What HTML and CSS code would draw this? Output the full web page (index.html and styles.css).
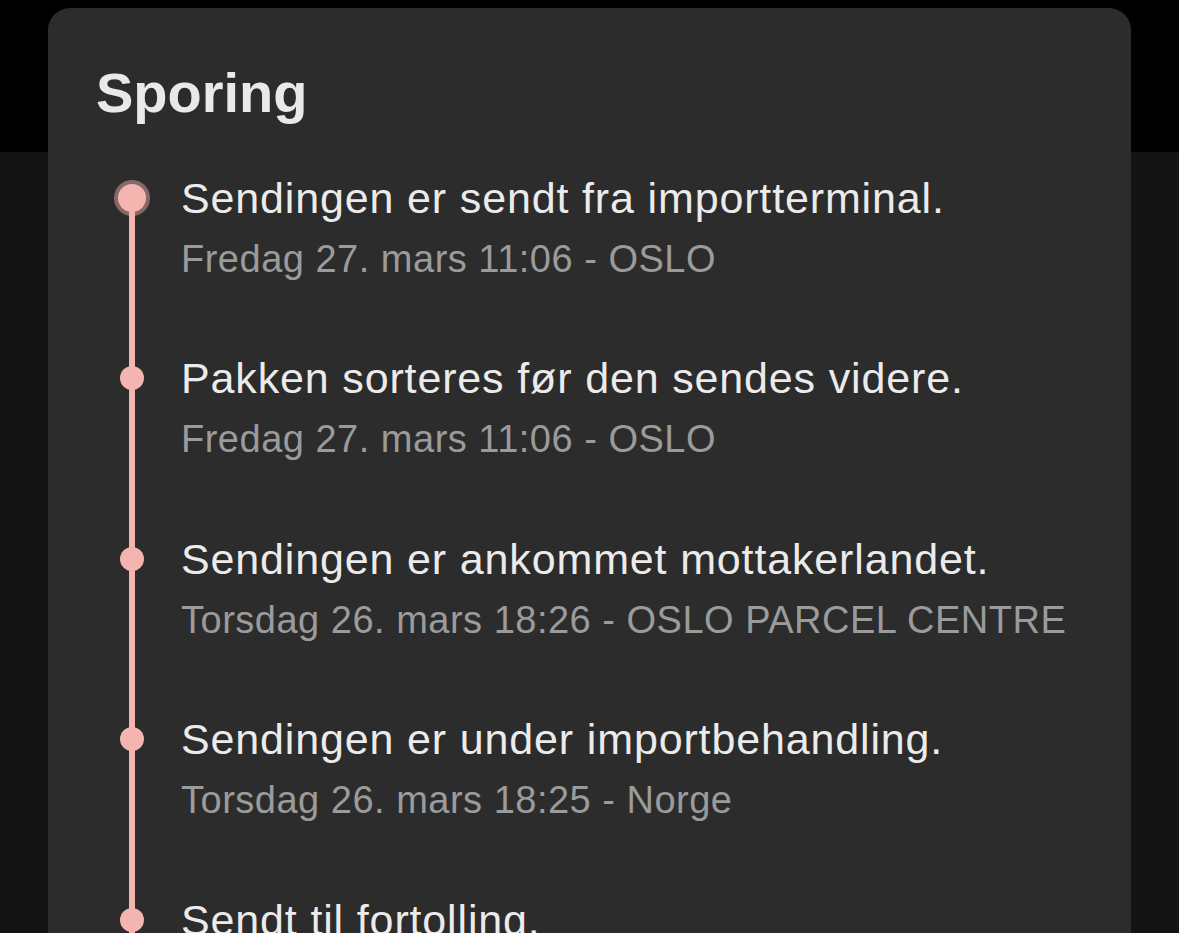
FILE: index.html
```html
<!DOCTYPE html>
<html lang="no">
<head>
<meta charset="utf-8">
<title>Sporing</title>
<link rel="stylesheet" href="styles.css">
</head>
<body>
<main class="page">
  <section class="card">
    <h1 class="title">Sporing</h1>
    <ol class="timeline">
      <li class="event event-current">
        <span class="marker"><span class="dot"></span></span>
        <div class="event-body">
          <p class="event-title">Sendingen er sendt fra importterminal.</p>
          <p class="event-meta">Fredag 27. mars 11:06 - OSLO</p>
        </div>
      </li>
      <li class="event">
        <span class="marker"><span class="dot"></span></span>
        <div class="event-body">
          <p class="event-title">Pakken sorteres før den sendes videre.</p>
          <p class="event-meta">Fredag 27. mars 11:06 - OSLO</p>
        </div>
      </li>
      <li class="event">
        <span class="marker"><span class="dot"></span></span>
        <div class="event-body">
          <p class="event-title">Sendingen er ankommet mottakerlandet.</p>
          <p class="event-meta">Torsdag 26. mars 18:26 - OSLO PARCEL CENTRE</p>
        </div>
      </li>
      <li class="event">
        <span class="marker"><span class="dot"></span></span>
        <div class="event-body">
          <p class="event-title">Sendingen er under importbehandling.</p>
          <p class="event-meta">Torsdag 26. mars 18:25 - Norge</p>
        </div>
      </li>
      <li class="event">
        <span class="marker"><span class="dot"></span></span>
        <div class="event-body">
          <p class="event-title">Sendt til fortolling.</p>
        </div>
      </li>
    </ol>
  </section>
</main>
</body>
</html>
```

FILE: styles.css
```css
html, body {
  margin: 0;
  padding: 0;
  height: 100%;
  overflow: hidden;
}

body {
  background: linear-gradient(#000 0, #000 152px, #141414 152px, #141414 100%);
  font-family: "Liberation Sans", Arial, sans-serif;
  color: #ebebeb;
}

.page {
  padding: 8px 48px 0 48px;
}

.card {
  background: #2c2c2c;
  border-radius: 22px;
  padding: 53px 48px 60px 48px;
  min-height: 1000px;
  box-sizing: border-box;
}

.title {
  margin: 0;
  font-size: 56px;
  line-height: 64px;
  font-weight: 700;
  color: #e9e9e9;
}

.timeline {
  list-style: none;
  margin: 46.5px 0 0 0;
  padding: 0;
  display: flex;
  flex-direction: column;
  gap: 69.5px;
}

.event {
  display: grid;
  grid-template-columns: 72px 1fr;
  column-gap: 13px;
  position: relative;
}

.marker {
  position: relative;
  height: 52px;
  display: flex;
  align-items: center;
  justify-content: center;
}

/* connecting line segment: from this dot down to the next */
.marker::after {
  content: "";
  position: absolute;
  left: 33px;
  top: 26px;
  width: 6px;
  height: 190px;
  background: #f4b4af;
}

.dot {
  position: relative;
  z-index: 1;
  width: 24px;
  height: 24px;
  border-radius: 50%;
  background: #f4b4af;
}

.event-current .dot {
  width: 28px;
  height: 28px;
  box-shadow: 0 0 0 4px rgba(244, 180, 175, 0.45);
}

.event-body {
  min-width: 0;
}

.event-title {
  margin: 0;
  font-size: 43px;
  line-height: 52px;
  letter-spacing: 0.85px;
  color: #ebebeb;
  white-space: nowrap;
}

.event-meta {
  margin: 11px 0 0 0;
  font-size: 38px;
  line-height: 48px;
  letter-spacing: 0.5px;
  color: #9b9b9b;
  white-space: nowrap;
}
```
